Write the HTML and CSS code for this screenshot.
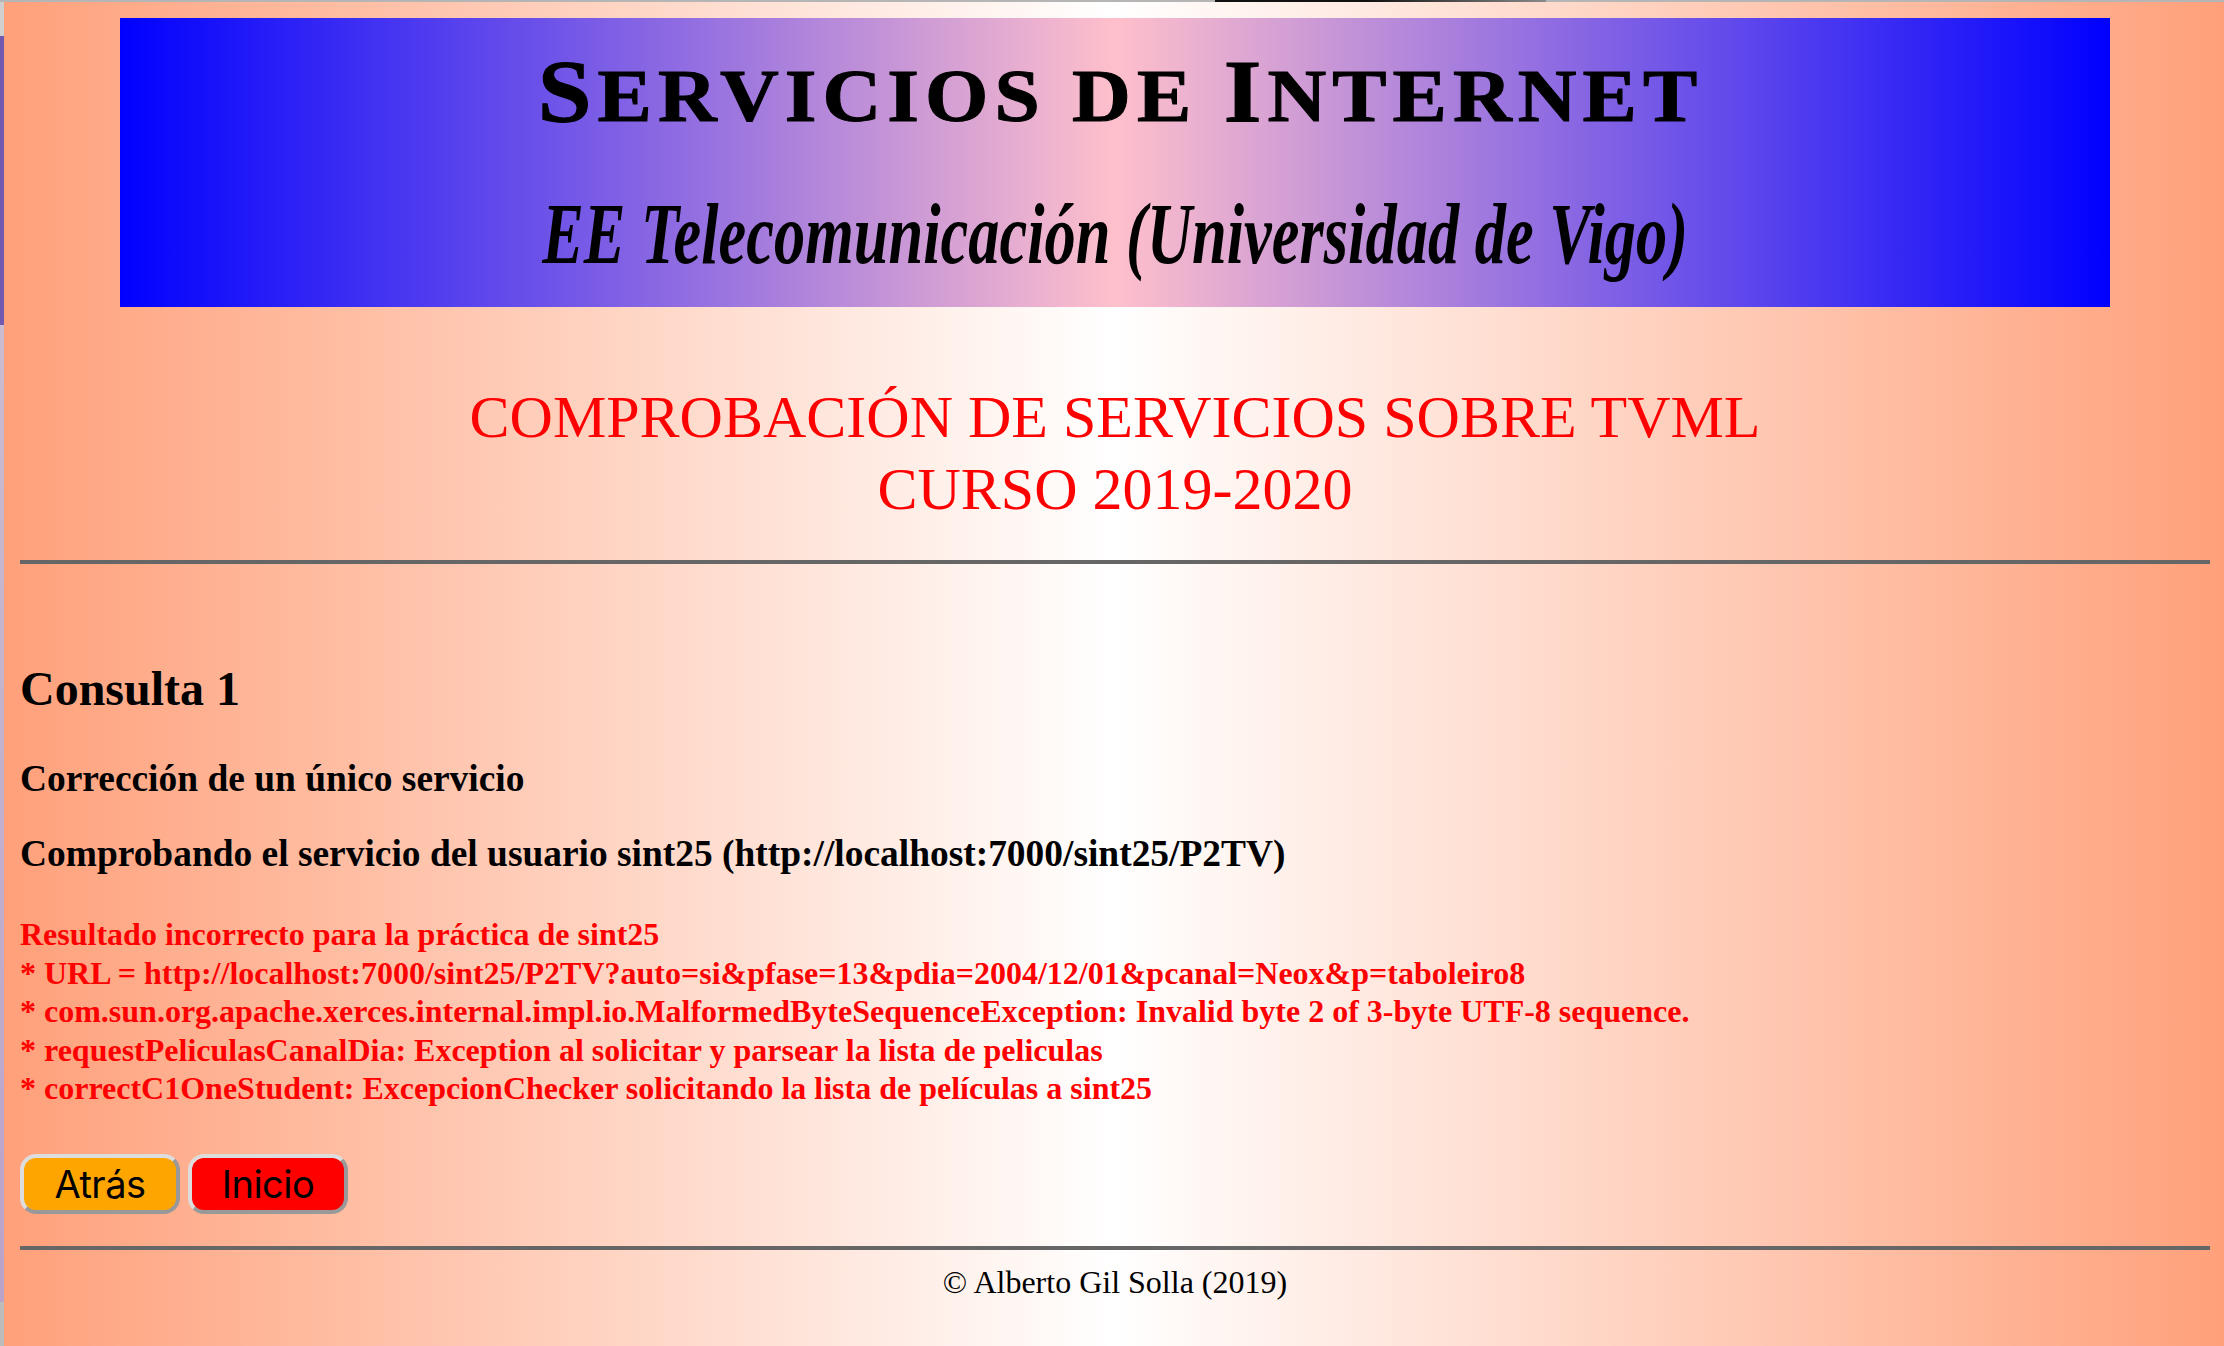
FILE: index.html
```html
<!DOCTYPE html>
<html lang="es">
<head>
<meta charset="utf-8">
<title>Servicios de Internet</title>
<link rel="stylesheet" href="styles.css">
</head>
<body>
<div class="topstrip"></div>
<div class="window">
	<div class="sidestrip"></div>
	<div class="page">
		<header class="banner">
			<h1 class="title"><span class="cap">S</span>ERVICIOS DE <span class="cap">I</span>NTERNET</h1>
			<h2 class="school">EE Telecomunicación (Universidad de Vigo)</h2>
		</header>

		<h2 class="course">COMPROBACIÓN DE SERVICIOS SOBRE TVML<br>CURSO 2019-2020</h2>
		<hr class="rule">

		<h2 class="query">Consulta 1</h2>
		<h3 class="sub">Corrección de un único servicio</h3>
		<h3 class="sub check">Comprobando el servicio del usuario sint25 (http://localhost:7000/sint25/P2TV)</h3>

		<p class="error">
			Resultado incorrecto para la práctica de sint25<br>
			* URL = http://localhost:7000/sint25/P2TV?auto=si&amp;pfase=13&amp;pdia=2004/12/01&amp;pcanal=Neox&amp;p=taboleiro8<br>
			* com.sun.org.apache.xerces.internal.impl.io.MalformedByteSequenceException: Invalid byte 2 of 3-byte UTF-8 sequence.<br>
			* requestPeliculasCanalDia: Exception al solicitar y parsear la lista de peliculas<br>
			* correctC1OneStudent: ExcepcionChecker solicitando la lista de películas a sint25
		</p>

		<div class="buttons">
			<button class="btn back">Atrás</button>
			<button class="btn home">Inicio</button>
		</div>

		<hr class="rule foot">
		<p class="copy">© Alberto Gil Solla (2019)</p>
	</div>
</div>
</body>
</html>
```

FILE: styles.css
```css
html, body {margin:0; padding:0;}
body {height:1346px; overflow:hidden; font-family:"Liberation Serif", serif; color:black;}

.topstrip {height:2px; background:linear-gradient(to right, #b5b5b5 1215px, #111 1215px, #111 1367px, #8a8a8a 1546px, #b5b5b5 1546px);}
.window {display:flex; height:1344px;}
.sidestrip {width:4px; flex:none; background:linear-gradient(to bottom, #cfcfcf 34px, #7358b0 34px, #7358b0 323px, #c9bcd0 323px, #b9a3c9 1300px, #bbb 1300px);}
.page {flex:1; padding:16px 14px 0 16px; background:linear-gradient(to right, lightsalmon, white 50%, lightsalmon);}

.banner {width:1990px; height:289px; margin-left:100px; text-align:center; background:linear-gradient(to right, blue, pink 50%, blue);}
.title {margin:0; padding:34px 0 0 10px; font-size:74px; line-height:80px; font-weight:bold; letter-spacing:5.5px; -webkit-text-stroke:1px black; transform:scaleX(1.1);}
.title .cap {font-size:88px;}
.school {display:inline-block; margin:0; padding-top:48px; font-size:86px; line-height:100px; font-weight:bold; font-style:italic; white-space:nowrap; transform:scaleX(0.726);}

.course {margin:74px 0 0; text-align:center; color:red; font-size:60px; line-height:72px; font-weight:normal;}
.rule {height:4px; margin:35px 0 0; border:0; background:#666;}

.query {margin:97px 0 0; font-size:48px; line-height:56px;}
.sub {margin:40px 0 0; font-size:37.44px; line-height:43px;}
.check {margin-top:32px;}
.error {margin:40px 0 0; color:red; font-size:32px; line-height:38.6px; font-weight:bold;}

.buttons {display:flex; gap:8px; margin-top:46px;}
.btn {width:160px; height:60px; padding:0; border:4px solid; border-color:#ddd #999 #999 #ddd; border-radius:16px; font-family:Inter, sans-serif; font-size:38px; letter-spacing:-0.5px; color:black;}
.back {background:orange;}
.home {background:red;}

.foot {margin-top:32px;}
.copy {margin:14px 0 0; text-align:center; font-size:32px; line-height:37px;}
```
